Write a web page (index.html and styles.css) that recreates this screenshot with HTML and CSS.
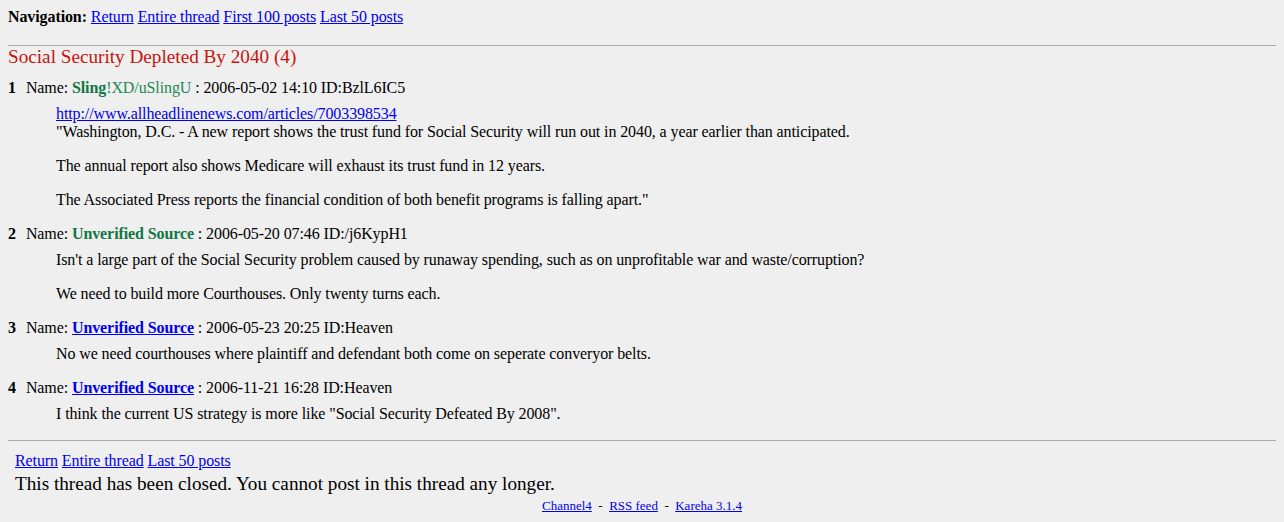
FILE: index.html
```
<!DOCTYPE html>
<html lang="en">
<head>
    <meta charset="UTF-8">
    <title>Social Security Depleted By 2040</title>
    <link rel="stylesheet" href="styles.css">
</head>
<body>
    <div class="navigation">
        <strong>Navigation:</strong>
        <a href="#">Return</a>
        <a href="#">Entire thread</a>
        <a href="#">First 100 posts</a>
        <a href="#">Last 50 posts</a>
    </div>

    <hr class="rule">

    <div class="thread">
        <h2 class="thread-title">Social Security Depleted By 2040 (4)</h2>

        <div class="reply">
            <h3 class="reply-head"><span class="reply-num">1</span>Name: <span class="poster-name">Sling</span><span class="poster-trip">!XD/uSlingU</span> : 2006-05-02 14:10 ID:BzlL6IC5</h3>
            <div class="reply-text">
                <p><a href="#">http://www.allheadlinenews.com/articles/7003398534</a><br>"Washington, D.C. - A new report shows the trust fund for Social Security will run out in 2040, a year earlier than anticipated.</p>
                <p>The annual report also shows Medicare will exhaust its trust fund in 12 years.</p>
                <p>The Associated Press reports the financial condition of both benefit programs is falling apart."</p>
            </div>
        </div>

        <div class="reply">
            <h3 class="reply-head"><span class="reply-num">2</span>Name: <span class="poster-name">Unverified Source</span> : 2006-05-20 07:46 ID:/j6KypH1</h3>
            <div class="reply-text">
                <p>Isn't a large part of the Social Security problem caused by runaway spending, such as on unprofitable war and waste/corruption?</p>
                <p>We need to build more Courthouses. Only twenty turns each.</p>
            </div>
        </div>

        <div class="reply">
            <h3 class="reply-head"><span class="reply-num">3</span>Name: <a class="poster-mail" href="#">Unverified Source</a> : 2006-05-23 20:25 ID:Heaven</h3>
            <div class="reply-text">
                <p>No we need courthouses where plaintiff and defendant both come on seperate converyor belts.</p>
            </div>
        </div>

        <div class="reply">
            <h3 class="reply-head"><span class="reply-num">4</span>Name: <a class="poster-mail" href="#">Unverified Source</a> : 2006-11-21 16:28 ID:Heaven</h3>
            <div class="reply-text">
                <p>I think the current US strategy is more like "Social Security Defeated By 2008".</p>
            </div>
        </div>
    </div>

    <hr class="rule rule-bottom">

    <div class="thread-footer">
        <div class="footer-links">
            <a href="#">Return</a>
            <a href="#">Entire thread</a>
            <a href="#">Last 50 posts</a>
        </div>
        <div class="closed">This thread has been closed. You cannot post in this thread any longer.</div>
    </div>

    <div class="credits">
        <a href="#">Channel4</a>&nbsp; - &nbsp;<a href="#">RSS feed</a>&nbsp; - &nbsp;<a href="#">Kareha 3.1.4</a>
    </div>
</body>
</html>
```

FILE: styles.css
```
body {
    margin: 8px;
    background-color: #efefef;
    color: #000;
    font-family: "Liberation Serif", "Times New Roman", serif;
    font-size: 16px;
    letter-spacing: -0.1px;
}

a {
    color: #0000ee;
}

.rule {
    border: 0;
    border-top: 1px solid #aaa;
    height: 0;
    margin: 19px 0 0;
}

.rule-bottom {
    margin-top: 17px;
}

.thread-title {
    margin: 0 0 11px;
    font-size: 19.2px;
    font-weight: normal;
    letter-spacing: 0;
    color: #c8140c;
}

.reply-head {
    margin: 0;
    font-size: 16px;
    font-weight: normal;
}

.reply-num {
    font-weight: bold;
    margin-right: 10px;
}

.poster-name {
    color: #117743;
    font-weight: bold;
}

.poster-trip {
    color: #228854;
}

.poster-mail {
    font-weight: bold;
}

.reply-text {
    margin: 8px 0 16px 48px;
}

.reply-text p {
    margin: 0 0 16px;
}

.reply-text p:last-child {
    margin-bottom: 0;
}

.thread-footer {
    padding: 11px 7px 0;
}

.closed {
    margin-top: 3px;
    font-size: 19.2px;
    letter-spacing: 0;
}

.credits {
    margin-top: 3px;
    text-align: center;
    font-size: 13px;
    letter-spacing: 0;
}
```
